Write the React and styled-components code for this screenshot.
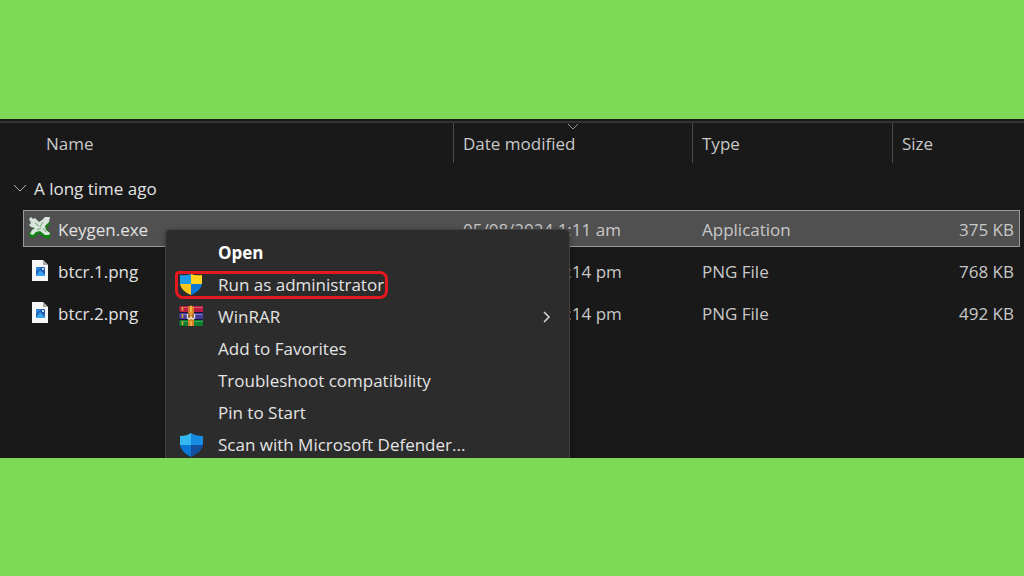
import React from 'react';
import styled, { createGlobalStyle, css } from 'styled-components';

const GlobalStyle = createGlobalStyle`
  * {
    box-sizing: border-box;
  }

  body {
    margin: 0;
    background-color: #7ed957;
    font-family: 'Open Sans', 'Noto Sans', sans-serif;
  }
`;

const files = [
  { name: 'Keygen.exe', date: '05/08/2024 1:11 am', type: 'Application', size: '375 KB', icon: 'exe', selected: true },
  { name: 'btcr.1.png', date: '04/08/2024  1:14 pm', type: 'PNG File', size: '768 KB', icon: 'png' },
  { name: 'btcr.2.png', date: '04/08/2024  1:14 pm', type: 'PNG File', size: '492 KB', icon: 'png' }
];

const menuItems = [
  { label: 'Open', bold: true },
  { label: 'Run as administrator', icon: 'uac', marked: true },
  { label: 'WinRAR', icon: 'winrar', submenu: true },
  { label: 'Add to Favorites' },
  { label: 'Troubleshoot compatibility' },
  { label: 'Pin to Start' },
  { label: 'Scan with Microsoft Defender...', icon: 'defender' }
];

const KeygenIcon = () => (
  <svg width="24" height="24" viewBox="0 0 24 24" aria-hidden="true">
    <path d="M1 17 L6 12 L2 6 L7 6 L11 9 L20 4 L22 8 L18 12 L23 18 L21 23 L17 22 L11 17 L5 22 L1 20Z" fill="#0b850b" />
    <path d="M1 3 L3 1 L5 3 L7 2 L11 6 L14 4 L17 1 L22 1 L21 6 L17 10 L18 14 L22 17 L21 19 L17 19 L12 15 L8 16 L5 19 L2 18 L4 14 L7 12 L3 11 L1 9 L3 7Z" fill="#d9e5dc" />
    <path d="M7 7 L11 10 M15 6 L12 11 M9 14 L13 12 M15 12 L18 16" stroke="#6aa872" strokeWidth="1" fill="none" />
  </svg>
);

const PngIcon = () => (
  <svg width="24" height="24" viewBox="0 0 24 24" aria-hidden="true">
    <path d="M4 2 H15 L20 7 V23 H4Z" fill="#f7f7f7" />
    <path d="M15 2 L20 7 H15Z" fill="#a9a9a9" />
    <rect x="8" y="9" width="9" height="9" rx="1" fill="#2458b0" />
    <path d="M8 17 L12 12 L17 17 V18 H8Z" fill="#38a3ea" />
    <path d="M8 10 Q8 9 9 9 H14 L8 14Z" fill="#2f86dd" />
    <rect x="14" y="10" width="2" height="2" fill="#b8e0fb" />
  </svg>
);

const UacIcon = () => (
  <svg width="24" height="24" viewBox="0 0 24 24" aria-hidden="true">
    <path d="M12 1 Q7 3 1 2 V11 H12Z" fill="#1f9ce6" />
    <path d="M12 1 Q17 3 23 2 V11 H12Z" fill="#ffd21c" />
    <path d="M1 11 H12 V22 Q2 18 1 11Z" fill="#ffc619" />
    <path d="M23 11 H12 V22 Q22 18 23 11Z" fill="#0b78d4" />
  </svg>
);

const WinrarIcon = () => (
  <svg width="24" height="24" viewBox="0 0 24 24" aria-hidden="true">
    <path d="M1 1 H24 V7 H1 L0 4Z" fill="#b81c42" />
    <path d="M2 2 H24 V3 H2Z" fill="#dc5579" />
    <path d="M1 8 H24 V14 H1 L0 11Z" fill="#453d9c" />
    <path d="M2 9 H24 V10 H2Z" fill="#766ec4" />
    <path d="M1 15 H24 V21 H1 L0 18Z" fill="#0e7b33" />
    <path d="M2 16 H24 V17 H2Z" fill="#3ba557" />
    <path d="M0 7.5 H24 M0 14.5 H24" stroke="#191633" strokeWidth="1" />
    <path d="M3.5 2 V6 M3.5 9 V13 M3.5 16 V20" stroke="#d9a526" strokeWidth="1.5" />
    <path d="M9 2 Q12 -1 15 2 V21 H9Z" fill="#d68022" />
    <path d="M12 1 V8 M12 16 V21" stroke="#f1b14a" strokeWidth="2" />
    <path d="M8.5 9 V12 Q8.5 14 10.5 14 L12 12 L13.5 14 Q15.5 14 15.5 12 V9" fill="#6b4321" stroke="#e0dcd2" strokeWidth="1.5" />
    <path d="M12 7 V12" stroke="#e79a35" strokeWidth="3" />
  </svg>
);

const DefenderIcon = () => (
  <svg width="24" height="24" viewBox="0 0 24 24" aria-hidden="true">
    <path d="M12 0 Q8 3 1 3 V12 H12Z" fill="#35b8f0" />
    <path d="M12 0 Q16 3 24 3 V12 H12Z" fill="#168be0" />
    <path d="M1 12 H12 V24 Q2 19 1 12Z" fill="#0878d4" />
    <path d="M24 12 H12 V24 Q23 19 24 12Z" fill="#124f9e" />
  </svg>
);

const icons = {
  exe: KeygenIcon,
  png: PngIcon,
  uac: UacIcon,
  winrar: WinrarIcon,
  defender: DefenderIcon
};

const App = () => {
  return (
    <Page>
      <GlobalStyle />
      <Explorer>
        <FileTable>
          <colgroup>
            <Column />
            <Column $width={239} />
            <Column $width={200} />
            <Column $width={128} />
          </colgroup>
          <thead>
            <tr>
              <HeadCell scope="col" $first>Name</HeadCell>
              <HeadCell scope="col" aria-sort="descending">
                Date modified
                <SortArrow width="12" height="8" viewBox="0 0 12 8" aria-hidden="true">
                  <path d="M1 1 L6 6 L11 1" fill="none" stroke="#999" />
                </SortArrow>
              </HeadCell>
              <HeadCell scope="col">Type</HeadCell>
              <HeadCell scope="col">Size</HeadCell>
            </tr>
          </thead>
          <tbody>
            <tr>
              <GroupCell colSpan="4" scope="rowgroup">
                <GroupButton type="button" aria-expanded="true">
                  <svg width="14" height="10" viewBox="0 0 14 10" aria-hidden="true">
                    <path d="M1 1 L7 7 L13 1" fill="none" stroke="#b0b0b0" />
                  </svg>
                  A long time ago
                </GroupButton>
              </GroupCell>
            </tr>
            {files.map((file) => {
              const Icon = icons[file.icon];
              return (
                <FileRow key={file.name} $selected={file.selected}>
                  <td>
                    <FileName>
                      <Icon />
                      {file.name}
                    </FileName>
                  </td>
                  <td>{file.date}</td>
                  <td>{file.type}</td>
                  <SizeCell>{file.size}</SizeCell>
                </FileRow>
              );
            })}
          </tbody>
        </FileTable>
        <ContextMenu>
          {menuItems.map((item) => {
            const Icon = icons[item.icon];
            return (
              <li key={item.label}>
                <MenuButton type="button" $bold={item.bold}>
                  <MenuLabel $marked={item.marked}>
                    <IconSlot>{Icon && <Icon />}</IconSlot>
                    {item.label}
                  </MenuLabel>
                  {item.submenu && (
                    <svg width="8" height="12" viewBox="0 0 8 12" aria-hidden="true">
                      <path d="M1 1 L6 6 L1 11" fill="none" stroke="#d8d8d8" strokeWidth="1.5" />
                    </svg>
                  )}
                </MenuButton>
              </li>
            );
          })}
        </ContextMenu>
      </Explorer>
    </Page>
  );
};

const Page = styled.main`
  display: flex;
  flex-direction: column;
  justify-content: center;
  min-height: 100vh;
`;

const Explorer = styled.section`
  position: relative;
  overflow: hidden;
  padding: 0 4px 122px 23px;
  background-color: #191919;
  color: #c8c8c8;
  font-size: 17px;
  line-height: 24px;
  border-top: 2px solid #191919;
  box-shadow: inset 0 2px 0 #333;
`;

const FileTable = styled.table`
  width: 100%;
  table-layout: fixed;
  border-collapse: separate;
  border-spacing: 0;

  td,
  th {
    padding: 0 6px 0 10px;
    text-align: left;
    font-weight: 400;
    white-space: nowrap;
  }
`;

const Column = styled.col`
  width: ${({ $width }) => ($width ? `${$width}px` : 'auto')};
`;

const HeadCell = styled.th`
  position: relative;
  height: 42px;

  && {
    padding-top: 4px;
  }

  ${({ $first }) =>
    $first
      ? css`
          && {
            padding-left: 23px;
          }
        `
      : css`
          background: linear-gradient(#4a4a4a, #4a4a4a) 0 2px / 1px 100% no-repeat;
        `}
`;

const SortArrow = styled.svg`
  position: absolute;
  top: 2px;
  left: 50%;
  transform: translateX(-50%);
`;

const GroupCell = styled.th`
  height: 47px;
`;

const GroupButton = styled.button`
  display: flex;
  align-items: center;
  gap: 7px;
  margin-left: -20px;
  padding: 6px 0 0;
  border: none;
  background: none;
  color: #e2e2e2;
  font: inherit;
`;

const FileRow = styled.tr`
  td {
    height: 42px;
    padding-top: 4px;
    border-bottom: 5px solid transparent;
    background-clip: padding-box;
  }

  ${({ $selected }) =>
    $selected &&
    css`
      td {
        background-color: #505050;
        box-shadow: inset 0 1px #999, inset 0 -1px #999;
      }

      td:first-child {
        box-shadow: inset 0 1px #999, inset 0 -1px #999, inset 1px 0 #999;
      }

      td:last-child {
        box-shadow: inset 0 1px #999, inset 0 -1px #999, inset -1px 0 #999;
      }
    `}
`;

const FileName = styled.span`
  display: flex;
  align-items: center;
  gap: 6px;
  margin-left: -5px;
  color: #e2e2e2;

  svg {
    margin-bottom: 4px;
  }
`;

const SizeCell = styled.td`
  && {
    text-align: right;
  }
`;

const ContextMenu = styled.menu`
  position: absolute;
  top: 108px;
  left: 165px;
  width: 405px;
  margin: 0;
  padding: 7px 0;
  list-style: none;
  background-color: #2c2c2c;
  border: 1px solid #424242;
  border-radius: 5px;
  box-shadow: 0 2px 6px rgba(0, 0, 0, 0.3);
`;

const MenuButton = styled.button`
  display: flex;
  align-items: center;
  justify-content: space-between;
  width: 100%;
  height: 32px;
  padding: 0 18px 0 9px;
  border: none;
  background: none;
  color: ${({ $bold }) => ($bold ? '#fff' : '#e4e4e4')};
  font: inherit;
  font-weight: ${({ $bold }) => ($bold ? 700 : 400)};
`;

const MenuLabel = styled.span`
  display: flex;
  align-items: center;
  gap: 15px;
  height: 28px;
  padding: 0 1px;
  border: 3px solid ${({ $marked }) => ($marked ? '#e3191f' : 'transparent')};
  border-radius: 4px 8px 8px 8px;
`;

const IconSlot = styled.span`
  display: flex;
  width: 24px;
  height: 24px;
`;

export default App;
